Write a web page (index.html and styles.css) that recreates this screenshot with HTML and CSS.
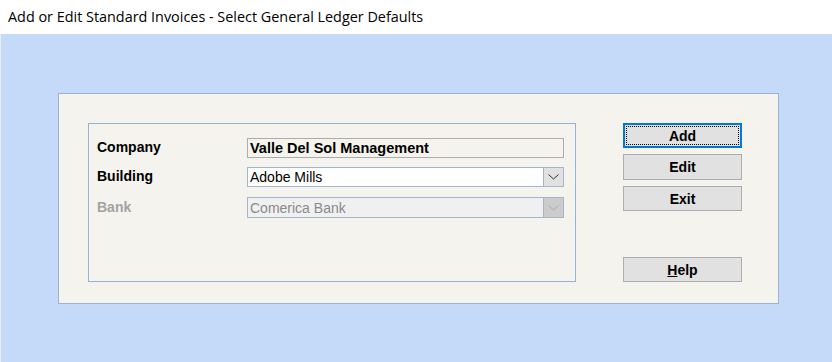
FILE: index.html
```html
<!DOCTYPE html>
<html lang="en">
<head>
  <meta charset="UTF-8" />
  <title>Select General Ledger Defaults</title>
  <link rel="stylesheet" href="styles.css">
</head>
<body>
  <div class="titlebar">Add or Edit Standard Invoices - Select General Ledger Defaults</div>

  <div class="desk">
    <div class="panel">
      <div class="group">
        <div class="row">
          <span class="label">Company</span>
          <div class="field field-static">Valle Del Sol Management</div>
        </div>
        <div class="row">
          <span class="label">Building</span>
          <div class="field combo">
            <span class="combo-text">Adobe Mills</span>
            <span class="combo-btn">
              <svg width="11" height="6" viewBox="0 0 11 6"><polyline points="0.5,0.5 5.5,5 10.5,0.5" fill="none" stroke="#333" stroke-width="1"/></svg>
            </span>
          </div>
        </div>
        <div class="row disabled">
          <span class="label">Bank</span>
          <div class="field combo">
            <span class="combo-text">Comerica Bank</span>
            <span class="combo-btn">
              <svg width="11" height="6" viewBox="0 0 11 6"><polyline points="0.5,0.5 5.5,5 10.5,0.5" fill="none" stroke="#a8a8a8" stroke-width="1"/></svg>
            </span>
          </div>
        </div>
      </div>

      <div class="buttons">
        <button class="btn focused"><span>Add</span></button>
        <button class="btn tall">Edit</button>
        <button class="btn">Exit</button>
        <button class="btn help"><u>H</u>elp</button>
      </div>
    </div>
  </div>
</body>
</html>
```

FILE: styles.css
```css
body {
  margin: 0;
  font-family: "Liberation Sans", Arial, sans-serif;
  background: #c5daf8;
  height: 362px;
  overflow: hidden;
  display: flex;
  flex-direction: column;
}
.titlebar {
  height: 34px;
  flex: none;
  background: #fff;
  padding-left: 8px;
  font-family: "Open Sans", sans-serif;
  font-size: 14.4px;
  line-height: 34px;
  color: #000;
  box-sizing: border-box;
}
.desk {
  flex: 1;
  padding: 59px 53px 0 57px;
  border-left: 1px solid #e8eef8;
}
.panel {
  display: flex;
  width: 721px;
  height: 211px;
  box-sizing: border-box;
  background: #f4f3ee;
  border: 1px solid #9cb3cf;
  padding: 29px 0 0 29px;
}
.group {
  width: 488px;
  height: 159px;
  box-sizing: border-box;
  border: 1px solid #93b2d8;
  padding: 14px 0 0 8px;
  display: flex;
  flex-direction: column;
  gap: 9px;
}
.row {
  display: flex;
  align-items: center;
  height: 20px;
}
.row.disabled {
  height: 21px;
  margin-top: 1px;
}
.label {
  width: 150px;
  font-size: 14px;
  font-weight: bold;
  color: #000;
  margin-top: -2px;
}
.disabled .label {
  color: #a3a3a3;
}
.field {
  width: 317px;
  height: 100%;
  box-sizing: border-box;
  font-size: 14px;
  display: flex;
  align-items: center;
  padding-left: 2px;
}
.field-static {
  border: 1px solid #acacac;
  font-weight: bold;
  font-size: 14.5px;
}
.combo {
  background: #fff;
  border: 1px solid #a2b6cf;
  justify-content: space-between;
  padding-right: 0;
}
.disabled .combo {
  background: #f0f0f0;
  color: #8a8a8a;
}
.combo-btn {
  width: 20px;
  height: 100%;
  box-sizing: border-box;
  background: #e1e1e1;
  border: 1px solid #a8b5c5;
  border-width: 0 0 0 1px;
  display: flex;
  align-items: center;
  justify-content: center;
}
.disabled .combo-btn {
  background: #cccccc;
}
.buttons {
  margin-left: 47px;
  display: flex;
  flex-direction: column;
  gap: 6px;
}
.btn {
  width: 119px;
  height: 25px;
  box-sizing: border-box;
  background: #e1e1e1;
  border: 1px solid #adadad;
  font-family: "Liberation Sans", Arial, sans-serif;
  font-size: 14px;
  font-weight: bold;
  color: #000;
  padding: 0;
}
.btn.tall {
  height: 26px;
}
.btn.focused {
  border: 2px solid #0078d7;
  padding: 1px;
}
.btn.focused span {
  display: flex;
  align-items: center;
  justify-content: center;
  height: 100%;
  border: 1px dotted #000;
  box-sizing: border-box;
}
.btn.help {
  margin-top: 40px;
}
```
